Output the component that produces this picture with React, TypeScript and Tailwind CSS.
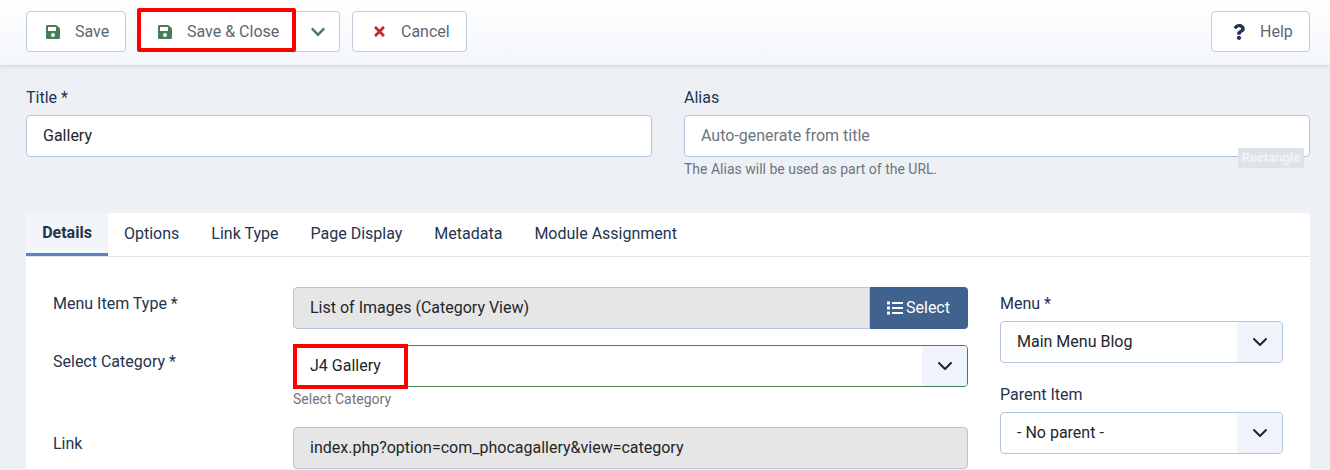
import React from 'react';
import { FaSave, FaTimes, FaQuestion, FaList, FaChevronDown } from 'react-icons/fa';

const Chevron: React.FC = () => (
  <svg viewBox="0 0 16 16" className="h-4 w-4" fill="none" stroke="#1a2433" strokeWidth="2" strokeLinecap="round" strokeLinejoin="round">
    <path d="M2 5l6 6 6-6" />
  </svg>
);

const ToolbarButton: React.FC<{ icon: React.ReactNode; label: string; className?: string }> = ({ icon, label, className }) => (
  <button className={`flex h-[41px] items-center rounded-[4px] border border-[#c3ccda] bg-white text-[16px] text-[#5c6673] ${className ?? ''}`}>
    {icon}
    <span>{label}</span>
  </button>
);

const SelectBox: React.FC<{ value: string; className?: string; border?: string }> = ({ value, className, border }) => (
  <div className={`flex h-[42px] items-stretch overflow-hidden rounded-[4px] border bg-white ${border ?? 'border-[#b5c5e0]'} ${className ?? ''}`}>
    <div className="flex flex-1 items-center pl-4 text-[16px] text-[#22262a]">{value}</div>
    <div className="flex w-[45px] items-center justify-center bg-[#eff4fb]">
      <Chevron />
    </div>
  </div>
);

const tabs = ['Options', 'Link Type', 'Page Display', 'Metadata', 'Module Assignment'];

export default function App() {
  return (
    <div className="relative h-[470px] w-[1330px] overflow-hidden bg-[#edf1f6] font-['Roboto',sans-serif]">
      <header className="flex h-[65px] items-start justify-between bg-gradient-to-b from-white to-[#f3f6fb] px-[20px] pt-[11px] shadow-[0_1px_4px_rgba(120,140,180,0.3)]">
        <div className="ml-[6px] flex">
          <ToolbarButton className="w-[100px] pl-[18px]" label="Save" icon={<FaSave className="mr-[14px] text-[16px] text-[#457d54]" />} />
          <div className="ml-[11px] flex">
            <ToolbarButton className="w-[159px] rounded-r-none border-r-0 pl-[19px]" label="Save & Close" icon={<FaSave className="mr-[14px] text-[16px] text-[#457d54]" />} />
            <button className="flex h-[41px] w-[44px] items-center justify-center rounded-r-[4px] border border-l-0 border-[#c3ccda] bg-white">
              <FaChevronDown className="text-[16px] text-[#457d54]" />
            </button>
          </div>
          <ToolbarButton className="ml-[12px] w-[115px] pl-[19px]" label="Cancel" icon={<FaTimes className="mr-[14px] text-[15px] text-[#c52827]" />} />
        </div>
        <ToolbarButton className="w-[99px] pl-[19px]" label="Help" icon={<FaQuestion className="mr-[13px] text-[16px] text-[#22344f]" />} />
      </header>

      <main className="px-[20px] pl-[26px]">
        <div className="flex gap-[32px] pt-[22px]">
          <div className="w-[626px]">
            <label className="block h-[28px] text-[16px] leading-[22px] text-[#22344f]">Title *</label>
            <div className="flex h-[42px] items-center rounded-[4px] border border-[#b5c5e0] bg-white pl-4 text-[16px] text-[#22262a]">Gallery</div>
          </div>
          <div className="w-[626px]">
            <label className="block h-[28px] text-[16px] leading-[22px] text-[#22344f]">Alias</label>
            <div className="flex h-[42px] items-center rounded-[4px] border border-[#b5c5e0] bg-white pl-4 text-[16px] text-[#6d757e]">Auto-generate from title</div>
            <p className="mt-[2px] text-[14px] leading-[21px] text-[#6d757e]">The Alias will be used as part of the URL.</p>
          </div>
        </div>

        <section className="mt-[33px] w-[1284px] rounded-t-[4px] bg-white">
          <nav className="flex h-[44px] border-b border-[#dfe5f0] text-[16px] text-[#22344f]">
            <div className="flex h-[43px] w-[82px] items-center justify-center border-b-[3px] border-[#5a83c0] bg-[#f2f6fb] font-bold">Details</div>
            {tabs.map((tab) => (
              <div key={tab} className="flex h-[41px] items-center px-4">{tab}</div>
            ))}
          </nav>

          <div className="flex pt-[30px] pl-[27px]">
            <div className="relative ml-[240px] w-[675px] shrink-0">
              <div className="flex h-[42px] overflow-hidden rounded-[4px]">
                <div className="flex flex-1 items-center rounded-l-[4px] border border-[#b5c5e0] bg-[#e6e6e6] pl-4 text-[16px] text-[#22262a]">List of Images (Category View)</div>
                <button className="flex w-[98px] items-center gap-[3px] bg-[#3f628f] pl-[17px] text-[16px] text-white">
                  <FaList className="text-[16px]" />
                  Select
                </button>
              </div>
              <SelectBox value="J4 Gallery" className="mt-[16px]" border="border-[#457d54]" />
              <p className="mt-[2px] text-[14px] leading-[21px] text-[#6d757e]">Select Category</p>
              <div className="mt-[17px] flex h-[42px] items-center rounded-[4px] border border-[#b5c5e0] bg-[#e6e6e6] pl-4 text-[16px] text-[#22262a]">index.php?option=com_phocagallery&amp;view=category</div>

              <div className="absolute left-[-240px] top-[5px] text-[16px] leading-[24px] text-[#22344f]">Menu Item Type *</div>
              <div className="absolute left-[-240px] top-[63px] text-[16px] leading-[24px] text-[#22344f]">Select Category *</div>
              <div className="absolute left-[-240px] top-[145px] text-[16px] leading-[24px] text-[#22344f]">Link</div>
            </div>
            <div className="ml-[32px] w-[283px] pt-[5px]">
              <label className="block h-[29px] text-[16px] leading-[24px] text-[#22344f]">Menu *</label>
              <SelectBox value="Main Menu Blog" />
              <label className="mt-[20px] block h-[29px] text-[16px] leading-[24px] text-[#22344f]">Parent Item</label>
              <SelectBox value="- No parent -" />
            </div>
          </div>
        </section>
      </main>

      <div className="absolute left-[1238px] top-[148px] flex h-[20px] w-[66px] items-center justify-center rounded-[1px] bg-[#dfe3e8] text-[13px] font-bold text-[#f1f3f6]">Rectangle</div>
      <div className="absolute left-[137px] top-[8px] h-[44px] w-[159px] rounded-[2px] border-[4px] border-[#ff0000]" />
      <div className="absolute left-[293px] top-[344px] h-[45px] w-[115px] border-[4px] border-[#ff0000]" />
    </div>
  );
}
